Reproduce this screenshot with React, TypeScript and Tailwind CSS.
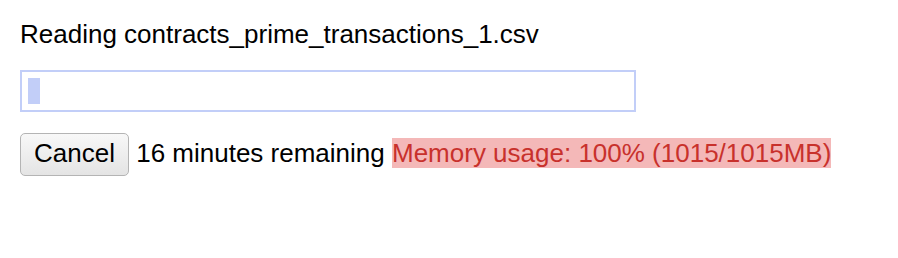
export default function App() {
  return (
    <div className="min-h-screen bg-white px-5 pt-[19px] font-['Liberation_Sans',Arial,sans-serif] text-[26px] leading-[30px] text-black">
      <div>Reading contracts_prime_transactions_1.csv</div>

      <div className="mt-[21px] h-[42px] w-[616px] border-2 border-[#c2cef8] p-[6px]">
        <div className="h-full w-[12px] bg-[#c2cef8]" />
      </div>

      <div className="mt-[21px]">
        <button className="rounded-[5px] border border-[#b4b4b4] bg-gradient-to-b from-[#f8f8f8] to-[#e4e4e4] px-[13px] pt-[4px] pb-[7px] leading-[30px] text-black">
          Cancel
        </button>{' '}
        16 minutes remaining{' '}
        <span className="bg-[#f4b8b8] text-[#c8312c]">Memory usage: 100% (1015/1015MB)</span>
      </div>
    </div>
  );
}
